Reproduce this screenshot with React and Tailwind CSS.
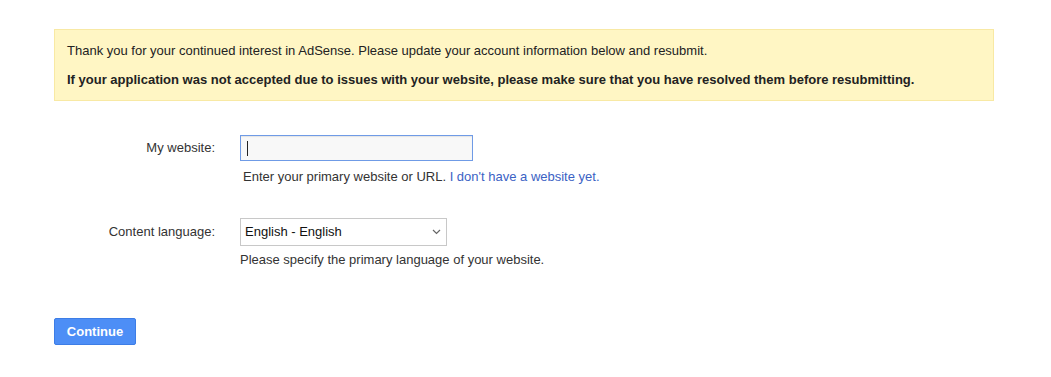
import { useState } from 'react'

export default function App() {
  const [site, setSite] = useState('')
  const [lang, setLang] = useState('en')

  return (
    <div className="min-h-screen bg-white pl-[54px] pt-[29px] text-[13px] text-[#222] font-['Liberation_Sans',Arial,sans-serif]">
      <div className="w-[940px] h-[72px] bg-[#fff6c4] border border-[#f8e9a4] pl-[12px] pt-[13px]">
        <p className="leading-[16px]">
          Thank you for your continued interest in AdSense. Please update your account information below and resubmit.
        </p>
        <p className="leading-[16px] mt-[13px] font-bold">
          If your application was not accepted due to issues with your website, please make sure that you have resolved them before resubmitting.
        </p>
      </div>

      <div className="mt-[34px] flex items-center">
        <label className="w-[186px] pr-[25px] text-right text-[#333]">My website:</label>
        <div className="relative">
          <input
            value={site}
            onChange={e => setSite(e.target.value)}
            className="w-[233px] h-[26px] border border-[#6f9be6] bg-[#f8f8f8] px-[6px] outline-none shadow-[inset_0_1px_1px_rgba(0,0,0,0.08)]"
          />
          {!site && <span className="absolute left-[7px] top-[6px] w-px h-[15px] bg-[#222]" />}
        </div>
      </div>
      <p className="ml-[189px] mt-[8px] leading-[16px] text-[#333]">
        Enter your primary website or URL. <a href="#" className="text-[#3b62c4]">I don't have a website yet.</a>
      </p>

      <div className="mt-[33px] flex items-center">
        <label className="w-[186px] pr-[25px] text-right text-[#333]">Content language:</label>
        <div className="relative">
          <select
            value={lang}
            onChange={e => setLang(e.target.value)}
            className="appearance-none w-[207px] h-[28px] border border-[#c8c8c8] bg-white pl-[4px] text-[13px] text-[#111] outline-none"
          >
            <option value="en">English - English</option>
          </select>
          <svg className="absolute right-[6px] top-[11px] pointer-events-none" width="9" height="6" viewBox="0 0 9 6">
            <path d="M1 1l3.5 3.5L8 1" fill="none" stroke="#666" strokeWidth="1.2" />
          </svg>
        </div>
      </div>
      <p className="ml-[186px] mt-[6px] leading-[16px] text-[#333]">
        Please specify the primary language of your website.
      </p>

      <button className="mt-[50px] w-[82px] h-[27px] bg-[#4d8ef6] border border-[#3d7de6] rounded-[2px] text-white font-bold">
        Continue
      </button>
    </div>
  )
}
